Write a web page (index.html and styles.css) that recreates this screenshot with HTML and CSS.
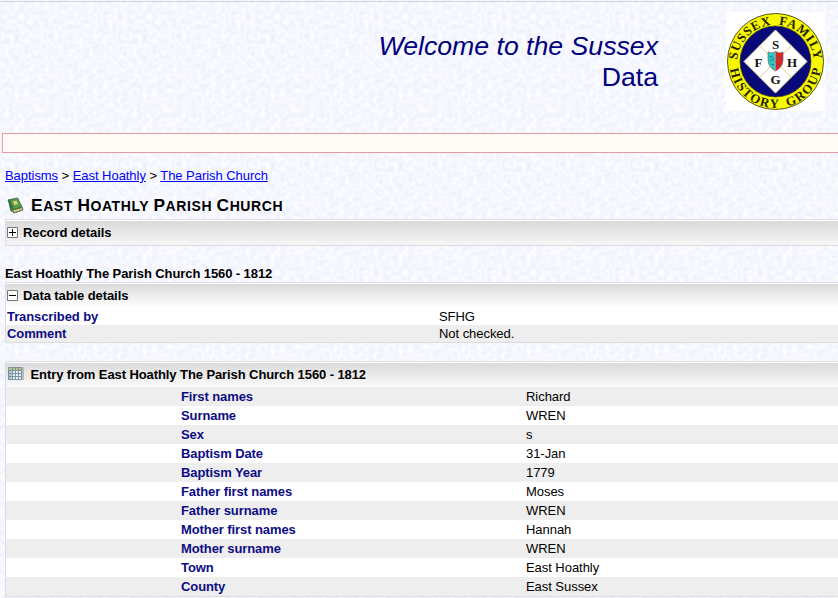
FILE: index.html
```html
<!DOCTYPE html>
<html lang="en">
<head>
<meta charset="utf-8">
<title>Sussex Data</title>
<link rel="stylesheet" href="styles.css">
</head>
<body>
<header class="banner">
  <h1 class="welcome"><em>Welcome to the Sussex</em><br>Data</h1>
  <svg class="logo" width="99" height="99" viewBox="0 0 99 99">
    <defs>
      <path id="arc-top" d="M12 60 A38.5 38.5 0 1 1 87 60"/>
      <path id="arc-bottom" d="M3.5 50 A46 46 0 0 0 95.5 50"/>
    </defs>
    <rect width="99" height="99" fill="#fff"/>
    <circle cx="49.5" cy="49.5" r="48" fill="#f8f800" stroke="#55551c" stroke-width="1"/>
    <circle cx="49.5" cy="49.5" r="35.5" fill="#080878" stroke="#444420" stroke-width=".7"/>
    <path d="M49.5 18 L81 49.5 L49.5 81 L18 49.5Z" fill="#fff" stroke="#e8e8a0"/>
    <path d="M33.7 33.7 L65.3 65.3 M65.3 33.7 L33.7 65.3" stroke="#d6d68e" stroke-width="1"/>
    <path d="M42 40 Q46 42 49.5 39.5 V59 Q42 55 42 48Z" fill="#2ccac6"/>
    <path d="M49.5 39.5 Q53 42 57 40 V48 Q57 55 49.5 59Z" fill="#e52222"/>
    <path d="M42 40 Q46 42 49.5 39.5 Q53 42 57 40 V48 Q57 55 49.5 59 Q42 55 42 48Z" fill="none" stroke="#555" stroke-width=".6"/>
    <path d="M43.5 44l4 2M44 49l4-2M45 52l3 1M51 44l4 2M51 49l4-2M51 53l3-1" stroke="#276477" stroke-width=".8"/>
    <g class="initials">
      <text x="49.5" y="36.5">S</text><text x="32.5" y="54.5">F</text>
      <text x="66" y="54.5">H</text><text x="49.5" y="72">G</text>
    </g>
    <g class="ring">
      <text><textPath href="#arc-top" startOffset="50%" textLength="114" lengthAdjust="spacing">SUSSEX FAMILY</textPath></text>
      <text><textPath href="#arc-bottom" startOffset="50%" textLength="130" lengthAdjust="spacing">HISTORY GROUP</textPath></text>
    </g>
  </svg>
</header>
<div class="notice"></div>
<main>
  <nav class="crumbs"><a href="#">Baptisms</a> &gt; <a href="#">East Hoathly</a> &gt; <a href="#">The Parish Church</a></nav>
  <h2 class="title">
    <svg width="17" height="17" viewBox="0 0 17 17">
      <path d="M1 3.5 L3.5 14 L7 16 L4.5 4Z" fill="#326c3b"/>
      <path d="M4 12 L14 10 L16 13 L7 16Z" fill="#d8c58b" stroke="#79693b" stroke-width=".6"/>
      <path d="M1 3 L10.5 1 L15 10 L5.5 12.7Z" fill="#5a9d50" stroke="#285d32" stroke-width=".8"/>
      <path d="M1 3 L3 2.5 L7 12.2 L5.5 12.7Z" fill="#367643"/>
      <path d="M6 4.5 L9.5 3.8 L11 7 L7.5 8Z" fill="#e6d65d"/>
      <path d="M5.5 13 L15.5 10.5 L16 13 L7 16Z" fill="none" stroke="#4c7648" stroke-width=".8"/>
    </svg>
    <span class="caps"><b>E</b>ast <b>H</b>oathly <b>P</b>arish <b>C</b>hurch</span>
  </h2>
  <section class="panel record">
    <h3><svg width="11" height="11"><path d="M.5.5h10v10H.5z" fill="#fff" stroke="#777"/><path d="M2 5.5h7M5.5 2v7" stroke="#000"/></svg>Record details</h3>
  </section>
  <h3 class="subhead">East Hoathly The Parish Church 1560 - 1812</h3>
  <section class="panel details">
    <h3><svg width="11" height="11"><path d="M.5.5h10v10H.5z" fill="#fff" stroke="#777"/><path d="M2 5.5h7" stroke="#000"/></svg>Data table details</h3>
    <dl><dt>Transcribed by</dt><dd>SFHG</dd></dl>
    <dl><dt>Comment</dt><dd>Not checked.</dd></dl>
  </section>
  <section class="panel entry">
    <h3><svg width="16" height="14" viewBox="0 0 16 14"><path d="M.5 .5h13v13H.5z" fill="#e7f0f4"/><path d="M.5 .5h13v3H.5z" fill="#b9c98a"/><path d="M.5 4h3v9h-3z" fill="#abc3ca"/><path d="M15 0v13" stroke="#b9bdb9" stroke-width="2"/><path d="M.5 .5h13v12H.5zM.5 3.5h13M.5 6.5h13M.5 9.5h13M4.5 1v12M7.5 1v12M10.5 1v12" fill="none" stroke="#7d929a"/></svg>Entry from East Hoathly The Parish Church 1560 - 1812</h3>
    <dl><dt>First names</dt><dd>Richard</dd></dl>
    <dl><dt>Surname</dt><dd>WREN</dd></dl>
    <dl><dt>Sex</dt><dd>s</dd></dl>
    <dl><dt>Baptism Date</dt><dd>31-Jan</dd></dl>
    <dl><dt>Baptism Year</dt><dd>1779</dd></dl>
    <dl><dt>Father first names</dt><dd>Moses</dd></dl>
    <dl><dt>Father surname</dt><dd>WREN</dd></dl>
    <dl><dt>Mother first names</dt><dd>Hannah</dd></dl>
    <dl><dt>Mother surname</dt><dd>WREN</dd></dl>
    <dl><dt>Town</dt><dd>East Hoathly</dd></dl>
    <dl><dt>County</dt><dd>East Sussex</dd></dl>
  </section>
</main>
</body>
</html>
```
FILE: styles.css
```css
* { box-sizing: border-box; }
html { overflow: hidden; }
body {
  margin: 0;
  height: 598px;
  overflow: hidden;
  font: 13px/17px "Liberation Sans", Arial, sans-serif;
  letter-spacing: -.05px;
  color: #000;
  background: #f5f8ff url("data:image/svg+xml,%3Csvg xmlns='http://www.w3.org/2000/svg' width='128' height='128'%3E%3Cfilter id='n' x='0' y='0' width='100%25' height='100%25' color-interpolation-filters='sRGB'%3E%3CfeTurbulence type='fractalNoise' baseFrequency='.2' numOctaves='2' seed='4' stitchTiles='stitch'/%3E%3CfeColorMatrix values='.11 0 0 0 .91 .09 0 0 0 .925 .03 0 0 0 .98 0 0 0 0 1'/%3E%3C/filter%3E%3Crect width='128' height='128' filter='url(%23n)'/%3E%3C/svg%3E");
}
h1, h2, h3, dl, dt, dd { margin: 0; font-size: inherit; }
h3, dt { letter-spacing: -.09px; }
svg { display: block; flex: none; }

.banner {
  height: 132px;
  margin-top: 1px;
  border-top: 1px solid #d3d5d9;
  display: flex;
  justify-content: flex-end;
  align-items: flex-start;
  padding: 10px 13px 0 0;
  gap: 68px;
}
.welcome {
  margin-top: 19px;
  font-size: 26.67px;
  line-height: 31px;
  font-weight: 400;
  letter-spacing: 0;
  text-align: right;
  color: #000080;
}
.initials { font: bold 13px "Liberation Serif", serif; text-anchor: middle; fill: #111; }
.ring { font: bold 12.8px "Liberation Serif", serif; text-anchor: middle; fill: #222208; letter-spacing: 0; word-spacing: 3px; }

.notice {
  height: 20px;
  margin: 0 -2px 0 2px;
  border: 1px solid #e29aa4;
  background: #fffaf5;
}
main { padding-left: 5px; }
.crumbs { margin-top: 14px; }
.crumbs a { color: #0000f8; }
.title {
  display: flex;
  align-items: center;
  gap: 7px;
  height: 22px;
  margin: 10px 0 3px;
  padding-left: 2px;
}
.caps { font-size: 14px; line-height: 22px; letter-spacing: .59px; text-transform: uppercase; }
.caps b { font-size: 17.3px; }
.panel {
  border: 1px solid #dcdde1;
  border-right: 0;
  background: #fff;
  padding-top: 1px;
}
.panel h3 {
  display: flex;
  align-items: center;
  height: 24px;
  padding: 0 0 2px 1px;
  gap: 5px;
  background: linear-gradient(#dadada, #fff);
}
.panel.record { height: 27px; }
.record h3 { background: linear-gradient(#dadada, #f6f6f6); }
.subhead { margin: 19px 0 0; }
.entry { margin-top: 18px; }
.panel.entry h3 { gap: 7px; padding-left: 2px; background: linear-gradient(#dadada, #fafafa); }
.panel.entry h3 svg { margin-right: -.5px; }
dl { display: grid; grid-template-columns: 432px 1fr; padding-left: 1px; }
dt { font-weight: bold; color: #0c0c85; }
.details dl:nth-of-type(even) { background: #eee; }
.entry dl { grid-template-columns: 345px 1fr; padding-left: 175px; line-height: 19px; }
.entry dl:nth-of-type(odd) { background: #eee; }
```
